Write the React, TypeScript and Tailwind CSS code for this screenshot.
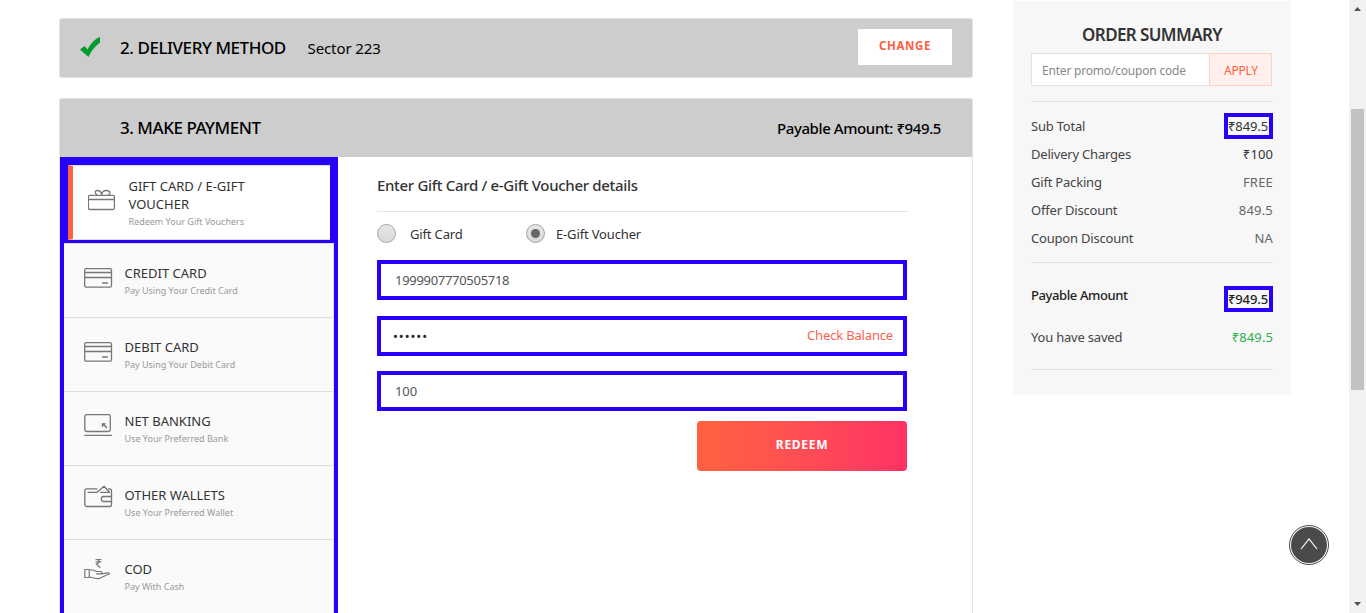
import type { ReactNode } from "react";

const stroke = {
  fill: "none",
  stroke: "#777777",
  strokeWidth: 1.3,
  strokeLinecap: "round" as const,
  strokeLinejoin: "round" as const,
};

const GiftIcon = () => (
  <svg width="29" height="24" viewBox="0 0 29 24" {...stroke}>
    <rect x=".4" y="7.300" width="26" height="14.200" rx="1.500" />
    <path d="M1 11.500h25M13.700 6.500c-.5-3-2.500-4-4.500-4-2.200 0-2.700 2.500-.7 4M13.700 6.500c.5-3 2.500-4 4.500-4 3.500 0 5 2.500 2.500 4" />
  </svg>
);

const CardIcon = () => (
  <svg width="29" height="24" viewBox="0 0 29 24" {...stroke}>
    <rect x=".7" y="2.700" width="26.800" height="18.500" rx="1.500" />
    <path d="M1 6.500h26M1 11.500h26" />
    <path d="M18.500 17h5" />
  </svg>
);

const BankIcon = () => (
  <svg width="29" height="24" viewBox="0 0 29 24" {...stroke}>
    <rect x=".8" y=".7" width="25.500" height="16.800" rx="1.800" />
    <path d="M.7 21.300h27" />
    <path d="M22.500 13.500l-3.500-3.500" strokeWidth="1.600" />
    <path d="M17.800 9.200h4.500l-4.500 4.300z" fill="#777777" stroke="none" />
  </svg>
);

const WalletIcon = () => (
  <svg width="29" height="24" viewBox="0 0 29 24" className="-mt-[3px]" {...stroke}>
    <path d="M13 3.800H2.500Q.8 3.800.8 5.800V19q0 2.500 2 2.500h22.700q2 0 2-2V6q0-2.200-2-2.200h-1" />
    <path d="M4 7.300h9l7-6 5.500 6h-9M27 11.500h-7.500q-2.200 0-2.200 2.500t2.200 2.500h8" />
  </svg>
);

const CodIcon = () => (
  <svg width="29" height="24" viewBox="0 0 29 24" className="-mt-[4px]" {...stroke} strokeWidth="1.200">
    <path d="M.8 11.500h4.500v8H.8zM5.500 12h3.500l3.500 1.500h4c2 0 1.500 2.300 0 2.300h-4M17.500 15.800l6-1c2.300-.3 2.500 1 .8 1.500l-9 4.200c-3 .8-6-.5-9.500-1.500" />
    <path d="M12 1.500h5M12 3.800h5M12.500 1.500c3.500 0 3.500 4.300 0 4.300h-.3l3.800 3.700" />
  </svg>
);

const methods = [
  { title: "CREDIT CARD", sub: "Pay Using Your Credit Card", icon: <CardIcon /> },
  { title: "DEBIT CARD", sub: "Pay Using Your Debit Card", icon: <CardIcon /> },
  { title: "NET BANKING", sub: "Use Your Preferred Bank", icon: <BankIcon /> },
  { title: "OTHER WALLETS", sub: "Use Your Preferred Wallet", icon: <WalletIcon /> },
  { title: "COD", sub: "Pay With Cash", icon: <CodIcon /> },
];

function Row({ label, value, dark }: { label: string; value: ReactNode; dark?: boolean }) {
  return (
    <div className="flex h-7 items-center justify-between text-[13px] tracking-[-.2px] text-[#444]">
      <span>{label}</span>
      <span className={dark ? "tracking-[.1px] text-[#333]" : "tracking-[.2px] text-[#666]"}>{value}</span>
    </div>
  );
}

function BoxedAmount({ children }: { children: ReactNode }) {
  return (
    <span className="flex h-[26px] w-[49px] items-center justify-center border-4 border-[#2600ff] pt-px pr-px tracking-[-.1px]">
      {children}
    </span>
  );
}

function Field({ children }: { children: ReactNode }) {
  return (
    <div className="flex h-10 items-center justify-between border-4 border-[#2600ff] bg-white pr-[10px] pl-[14px] text-[13px] tracking-[-.3px] text-[#555]">
      {children}
    </div>
  );
}

function Radio({ checked }: { checked?: boolean }) {
  return (
    <span className="-mt-[2px] flex size-[19px] items-center justify-center rounded-full border border-[#a5a5a5] bg-linear-to-b from-[#e6e6e6] to-[#d9d9d9]">
      {checked && <span className="size-[9px] rounded-full bg-[#666]" />}
    </span>
  );
}

export default function App() {
  return (
    <div className="flex h-[613px] w-full overflow-hidden bg-white font-['Noto_Sans',sans-serif] whitespace-nowrap text-[#333]">
      <main className="ml-[59px] w-[914px] shrink-0 pt-[18px]">
        <section className="flex h-[60px] items-center rounded-[3px] border border-[#e3e3e3] bg-[#cdcdcd] pl-[20px] text-black">
          <svg width="21" height="21" viewBox="0 0 21 21" className="-mt-[2px]">
            <path d="M0 12.500l4.500-3.500 3 3.500C10.500 7 15 1.500 20 0v5.500C15 9.500 11 14 8.500 20z" fill="#049b2e" />
          </svg>
          <h2 className="ml-[19px] w-[187.500px] text-[17px] font-medium tracking-[-.45px]">2. DELIVERY METHOD</h2>
          <span className="text-[15px] tracking-[-.1px]">Sector 223</span>
          <button className="-mt-[2px] mr-[20px] ml-auto flex h-9 w-[94px] items-center justify-center bg-white pb-[3px] text-[11.500px] font-bold tracking-[.6px] text-[#ff5f40]">
            CHANGE
          </button>
        </section>

        <section className="mt-5 h-[600px] rounded-[3px] border border-[#e3e3e3] bg-white">
          <header className="flex h-[58px] items-center justify-between bg-[#cdcdcd] pr-[31px] pl-[60px] text-black">
            <h2 className="text-[17px] font-medium tracking-[-.47px]">3. MAKE PAYMENT</h2>
            <span className="text-[15px] font-medium tracking-[-.4px]">Payable Amount: ₹949.5</span>
          </header>
          <div className="flex">
            <nav className="h-[540px] w-[278px] bg-[#2600ff]">
              <div className="px-2 pt-2 pb-[3px]">
                <div className="flex h-[75px] border-y border-l-[5px] border-[#dedede] border-l-[#ff6040] bg-white">
                  <div className="mt-[22px] ml-[15px] w-[41px]"><GiftIcon /></div>
                  <div className="-ml-[.5px] pt-[11px]">
                    <div className="text-[13px] leading-[18px]">GIFT CARD / E-GIFT<br />VOUCHER</div>
                    <div className="text-[9px] leading-[17px] text-[#999]">Redeem Your Gift Vouchers</div>
                  </div>
                </div>
              </div>
              <div className="mx-1 border-t border-r border-[#dedede] bg-[#fafafa]">
                {methods.map((m) => (
                  <div key={m.title} className="flex h-[74px] border-b border-[#dedede] pl-5">
                    <div className="mt-[22px] w-[41px]">{m.icon}</div>
                    <div className="-ml-[.5px] pt-5">
                      <div className="text-[13px] leading-[18px]">{m.title}</div>
                      <div className="text-[9px] leading-[17px] text-[#999]">{m.sub}</div>
                    </div>
                  </div>
                ))}
              </div>
            </nav>
            <div className="ml-[39px] w-[530px]">
              <h3 className="flex h-[55px] items-center border-b border-[#e3e3e3] pt-[3px] text-[15px] font-medium tracking-[-.32px]">
                Enter Gift Card / e-Gift Voucher details
              </h3>
              <div className="flex h-12 items-center pb-[3px] text-[13px] tracking-[-.15px]">
                <Radio />
                <span className="ml-[14px] w-[116px]">Gift Card</span>
                <Radio checked />
                <span className="ml-[11px]">E-Gift Voucher</span>
              </div>
              <div className="flex flex-col gap-[15.500px]">
                <Field><span className="mt-[2px]">1999907770505718</span></Field>
                <Field>
                  <span className="-ml-[2px] pt-[2px] text-[13px] tracking-[.95px] text-[#222]">••••••</span>
                  <span className="text-[13px] tracking-[-.17px] text-[#ff5f50]">Check Balance</span>
                </Field>
                <Field><span className="mt-[2px] tracking-[-.1px]">100</span></Field>
              </div>
              <button className="mt-[10px] ml-auto flex h-[50px] w-[210px] items-center justify-center rounded-[4px] bg-linear-to-r from-[#ff623e] to-[#ff3164] pb-[3px] text-[12px] font-bold tracking-[.7px] text-white">
                REDEEM
              </button>
            </div>
          </div>
        </section>
      </main>

      <aside className="mt-px ml-10 h-[394px] w-[278px] shrink-0 bg-[#f7f7f7] px-[18px]">
        <h2 className="flex h-[52px] items-center justify-center pt-[15px] text-[17px] font-semibold tracking-[-.62px]">ORDER SUMMARY</h2>
        <div className="flex h-[33px] w-[241px] text-[12px] tracking-[-.2px]">
          <div className="flex flex-1 items-center border border-r-0 border-[#e3e3e3] bg-white pt-[2px] pl-[10px] text-[#888]">Enter promo/coupon code</div>
          <div className="flex w-[63px] items-center justify-center border border-[#ffcfc6] bg-[#fff0ee] pt-[2px] pl-px text-[#ff5f40]">APPLY</div>
        </div>
        <div className="mt-[15px] h-[162px] border-y border-[#e3e3e3] pt-[11px]">
          <Row label="Sub Total" dark value={<div className="-mt-[2px]"><BoxedAmount>₹849.5</BoxedAmount></div>} />
          <Row label="Delivery Charges" value="₹100" dark />
          <Row label="Gift Packing" value="FREE" />
          <Row label="Offer Discount" value="849.5" />
          <Row label="Coupon Discount" value="NA" />
        </div>
        <div className="h-[107px] border-b border-[#e3e3e3] pt-[22px] text-[13px] tracking-[-.2px]">
          <div className="flex h-[28px] items-center justify-between font-medium text-[#222]">
            <span className="-mt-[6px] tracking-[-.4px]">Payable Amount</span>
            <BoxedAmount>₹949.5</BoxedAmount>
          </div>
          <div className="mt-[11px] flex h-7 items-center justify-between text-[#444]">
            <span>You have saved</span>
            <span className="tracking-[.1px] text-[#2bb24c]">₹849.5</span>
          </div>
        </div>
      </aside>

      <div className="ml-auto flex w-[17px] shrink-0 flex-col items-center bg-[#f1f1f1]">
        <svg width="7" height="4" className="mt-[7px]" viewBox="0 0 7 4"><path d="M0 4L3.500 0 7 4z" fill="#505050" /></svg>
        <div className="mt-[98px] h-[281px] w-[13px] bg-[#c1c1c1]" />
        <svg width="7" height="4" className="mt-auto mb-[7px]" viewBox="0 0 7 4"><path d="M0 0h7L3.500 4z" fill="#505050" /></svg>
      </div>

      <button className="fixed top-[525px] left-[1289px] flex size-10 items-center justify-center rounded-full border border-[#4a4a4a] bg-white">
        <span className="flex size-9 items-center justify-center rounded-full bg-[#4a4a4a]">
          <svg width="18" height="12" viewBox="0 0 18 12" className="-mt-[3px]" fill="none" stroke="white" strokeWidth="1.200"><path d="M1 11L9 1l8 10" /></svg>
        </span>
      </button>
    </div>
  );
}
